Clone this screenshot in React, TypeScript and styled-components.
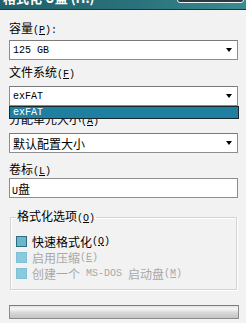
import { createGlobalStyle, styled } from 'styled-components';

const GlobalStyle = createGlobalStyle`
  * { box-sizing: border-box; }
  html, body { margin: 0; padding: 0; background: #f2f2f2; }
  body {
    width: 246px;
    height: 323px;
    overflow: hidden;
    font-family: "Noto Sans CJK SC", "DejaVu Sans", sans-serif;
  }
`;

const Window = styled.div`
  width: 246px;
  height: 323px;
  display: flex;
  flex-direction: column;
  background: #f2f2f2;
  overflow: hidden;
`;

const TitleBar = styled.div`
  flex: none;
  height: 10px;
  display: flex;
  justify-content: space-between;
  align-items: flex-end;
  overflow: hidden;
  background: linear-gradient(90deg, #21606a 0%, #2a727b 55%, #3a8b91 100%);
  border-bottom: 1px solid #163a3f;
`;

const TitleText = styled.span`
  padding-left: 3px;
  margin-bottom: 4px;
  color: #fff;
  font-size: 13px;
  font-weight: bold;
  line-height: 15px;
  white-space: nowrap;
`;

const CloseButton = styled.div`
  align-self: flex-start;
  width: 67px;
  height: 10px;
  margin-top: -7px;
  margin-right: 2px;
  border: 1px solid #eef4f4;
  border-radius: 0 0 3px 3px;
  background: #2c3843;
`;

const Body = styled.div`
  display: flex;
  flex-direction: column;
  padding: 11px 8px 0 9px;
`;

const Label = styled.div<{ $gap?: number }>`
  height: 14px;
  margin-top: ${(p) => p.$gap ?? 0}px;
  color: #000;
  font-size: 12px;
  line-height: 14px;
  white-space: nowrap;
`;

const Latin = styled.span`
  font-family: "Liberation Mono", monospace;
  font-size: 10px;
  white-space: pre;
`;

const ComboWrap = styled.div<{ $gap?: number }>`
  position: relative;
  width: 229px;
  margin-top: ${(p) => p.$gap ?? 0}px;
`;

const Combo = styled.div`
  height: 20px;
  display: flex;
  align-items: center;
  justify-content: space-between;
  padding: 0 5px 0 3px;
  border: 1px solid #8d8d8d;
  border-top-color: #7a7a7a;
  background: #fff;
  color: #000;
  font-size: 12px;
  white-space: nowrap;
`;

const Arrow = styled.span`
  width: 0;
  height: 0;
  border-left: 3.5px solid transparent;
  border-right: 3.5px solid transparent;
  border-top: 4px solid #000;
`;

const DropList = styled.div`
  position: absolute;
  top: 100%;
  left: 0;
  z-index: 2;
  width: 230px;
  height: 13px;
  display: flex;
  align-items: center;
  padding-left: 3px;
  border: 1px solid #18262d;
  background: #1f7fa1;
  color: #fff;
`;

const TextBox = styled.div<{ $gap?: number }>`
  width: 229px;
  height: 20px;
  margin-top: ${(p) => p.$gap ?? 0}px;
  display: flex;
  align-items: center;
  padding-left: 2px;
  border: 1px solid #8d8d8d;
  background: #fff;
  color: #000;
  font-size: 12px;
`;

const Group = styled.fieldset`
  width: 227px;
  height: 80px;
  margin: 12px 0 0 1px;
  padding: 0 5px;
  border: 1px solid #d3d3d3;
  box-shadow: inset 1px 1px 0 #fff, 1px 1px 0 #fff;
`;

const Legend = styled.legend`
  padding: 0 1px;
  color: #000;
  font-size: 12px;
  line-height: 12px;
  white-space: nowrap;
`;

const CheckRow = styled.div<{ $disabled?: boolean; $first?: boolean }>`
  height: 16px;
  margin-top: ${(p) => (p.$first ? 8 : 0)}px;
  display: flex;
  align-items: center;
  color: ${(p) => (p.$disabled ? '#a8a8a8' : '#000')};
  font-size: 12px;
  white-space: nowrap;
`;

const CheckBox = styled.span<{ $disabled?: boolean }>`
  flex: none;
  width: 11px;
  height: 11px;
  margin-right: 5px;
  border: 1px solid ${(p) => (p.$disabled ? '#7fc0d4' : '#2f6c80')};
  background: ${(p) => (p.$disabled ? '#8acade' : '#6cb6cb')};
`;

const Progress = styled.div`
  width: 230px;
  height: 14px;
  margin-top: 15px;
  border: 1px solid #8a8a8a;
  border-top-color: #7b7b7b;
  background: linear-gradient(180deg, #e4e4e4 0%, #f6f6f6 25%, #d8d8d8 55%, #c4c4c4 100%);
`;

const App = () => {
  return (
    <Window>
      <GlobalStyle />
      <TitleBar>
        <TitleText>格式化 U盘 (H:)</TitleText>
        <CloseButton />
      </TitleBar>
      <Body>
        <Label>
          容量<Latin>(<u>P</u>):</Latin>
        </Label>
        <ComboWrap $gap={5}>
          <Combo>
            <Latin>125 GB</Latin>
            <Arrow />
          </Combo>
        </ComboWrap>

        <Label $gap={5}>
          文件系统<Latin>(<u>F</u>)</Latin>
        </Label>
        <ComboWrap $gap={7}>
          <Combo>
            <Latin>exFAT</Latin>
            <Arrow />
          </Combo>
          <DropList>
            <Latin>exFAT</Latin>
          </DropList>
        </ComboWrap>

        <Label $gap={6}>
          分配单元大小<Latin>(<u>A</u>)</Latin>
        </Label>
        <ComboWrap $gap={7}>
          <Combo>
            <span>默认配置大小</span>
            <Arrow />
          </Combo>
        </ComboWrap>

        <Label $gap={9}>
          卷标<Latin>(<u>L</u>)</Latin>
        </Label>
        <TextBox $gap={2}>
          <span>
            <Latin>U</Latin>盘
          </span>
        </TextBox>

        <Group>
          <Legend>
            格式化选项<Latin>(<u>O</u>)</Latin>
          </Legend>
          <CheckRow $first>
            <CheckBox />
            快速格式化<Latin>(<u>Q</u>)</Latin>
          </CheckRow>
          <CheckRow $disabled>
            <CheckBox $disabled />
            启用压缩<Latin>(<u>E</u>)</Latin>
          </CheckRow>
          <CheckRow $disabled>
            <CheckBox $disabled />
            创建一个<Latin>{' MS-DOS '}</Latin>启动盘<Latin>(<u>M</u>)</Latin>
          </CheckRow>
        </Group>

        <Progress />
      </Body>
    </Window>
  );
};

export default App;
